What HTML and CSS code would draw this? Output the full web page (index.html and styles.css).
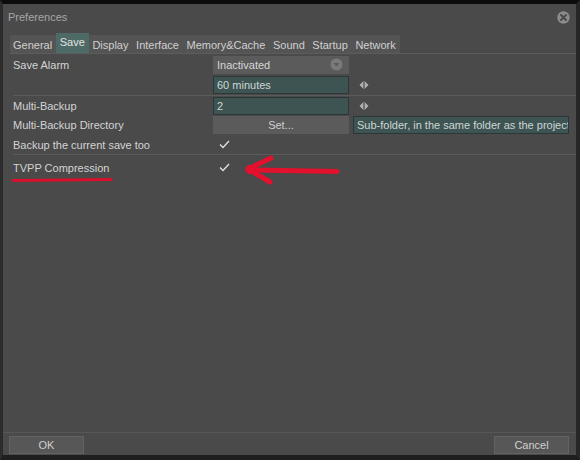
FILE: index.html
```html
<!DOCTYPE html>
<html>
<head>
<meta charset="utf-8">
<title>Preferences</title>
<link rel="stylesheet" href="styles.css">
</head>
<body>
<div class="window">
  <div class="titlebar">
    <span class="title">Preferences</span>
    <svg class="close" width="13" height="13" viewBox="0 0 13 13"><circle cx="6.5" cy="6.5" r="6.2" fill="#8c8c8c"/><path d="M4 4 L9 9 M9 4 L4 9" stroke="#4a4a4a" stroke-width="2" stroke-linecap="round"/></svg>
  </div>
  <div class="tabs">
    <span class="tab">General</span>
    <span class="tab active">Save</span>
    <span class="tab">Display</span>
    <span class="tab">Interface</span>
    <span class="tab">Memory&amp;Cache</span>
    <span class="tab">Sound</span>
    <span class="tab">Startup</span>
    <span class="tab">Network</span>
  </div>
  <div class="content">
    <div class="section s1">
      <div class="row">
        <span class="label">Save Alarm</span>
        <div class="combo">Inactivated
          <svg class="combo-icon" width="13" height="13" viewBox="0 0 13 13"><circle cx="6.5" cy="6.5" r="6" fill="#7a7a7a"/><path d="M3.5 5 L9.5 5 L6.5 8.5 Z" fill="#5a5a5a"/></svg>
        </div>
      </div>
      <div class="row">
        <span class="label"></span>
        <div class="field">60 minutes</div>
        <svg class="spin" width="10" height="8" viewBox="0 0 10 8"><path d="M4 0.5 L0.5 4 L4 7.5 Z M6 0.5 L9.5 4 L6 7.5 Z" fill="#b0b0b0"/><rect x="4.6" y="0" width="0.8" height="8" fill="#b0b0b0"/></svg>
      </div>
    </div>
    <div class="section s2">
      <div class="row">
        <span class="label">Multi-Backup</span>
        <div class="field">2</div>
        <svg class="spin" width="10" height="8" viewBox="0 0 10 8"><path d="M4 0.5 L0.5 4 L4 7.5 Z M6 0.5 L9.5 4 L6 7.5 Z" fill="#b0b0b0"/><rect x="4.6" y="0" width="0.8" height="8" fill="#b0b0b0"/></svg>
      </div>
      <div class="row">
        <span class="label">Multi-Backup Directory</span>
        <div class="button">Set...</div>
        <div class="field wide">Sub-folder, in the same folder as the project</div>
      </div>
      <div class="row tall">
        <span class="label">Backup the current save too</span>
        <svg class="check" width="11" height="9" viewBox="0 0 11 9"><path d="M1 4.5 L4 7.5 L10 1" fill="none" stroke="#e0e0e0" stroke-width="1.3"/></svg>
      </div>
    </div>
    <div class="section s3">
      <div class="row taller">
        <span class="label">TVPP Compression</span>
        <svg class="check" width="11" height="9" viewBox="0 0 11 9"><path d="M1 4.5 L4 7.5 L10 1" fill="none" stroke="#e0e0e0" stroke-width="1.3"/></svg>
      </div>
    </div>
  </div>
  <div class="footer">
    <div class="button small">OK</div>
    <div class="button small">Cancel</div>
  </div>
  <svg class="annot" width="580" height="460" viewBox="0 0 580 460">
    <path d="M13 180.5 L111 179.5" stroke="#d9102c" stroke-width="3" stroke-linecap="round"/>
    <path d="M337 171.5 L256 170" stroke="#e3102e" stroke-width="5" stroke-linecap="round"/>
    <path d="M271 158 L248 169 L270 182" fill="none" stroke="#e3102e" stroke-width="5" stroke-linecap="round" stroke-linejoin="round"/>
    <circle cx="250" cy="169.5" r="4.5" fill="#e3102e"/>
  </svg>
</div>
</body>
</html>
```

FILE: styles.css
```css
* { box-sizing: border-box; }
html, body { margin: 0; padding: 0; }
body {
  width: 580px;
  height: 460px;
  background: #1c1c1c;
  font-family: "Liberation Sans", Arial, sans-serif;
  font-size: 11px;
  color: #d2d2d2;
  overflow: hidden;
}
.window {
  position: relative;
  width: 580px;
  height: 460px;
  background: #4a4a4a;
  border-top: 4px solid #0c0c0c;
  border-right: 4px solid #262626;
  border-bottom: 5px solid #1e1e1e;
  border-left: 3px solid #2c2c2c;
  display: flex;
  flex-direction: column;
}
.titlebar {
  height: 30px;
  display: flex;
  align-items: center;
  justify-content: space-between;
  padding: 0 6px 5px 5px;
}
.title { color: #a6a6a6; }
.close { display: block; margin-top: 1px; }
.tabs {
  height: 20px;
  display: flex;
  align-items: flex-end;
  margin-left: 7px;
  border-bottom: 1px solid #5c5c5c;
}
.tab {
  height: 18px;
  line-height: 18px;
  padding: 1px 4px 0 3.6px;
  background: #545454;
  color: #d0d0d0;
}
.tab:first-child { padding-left: 3px; }
.tab.active {
  height: 20px;
  line-height: 16px;
  background: #4e6a66;
  color: #e2e2e2;
}
.content { padding-left: 10px; }
.section { border-bottom: 1px solid #5a5a5a; }
.s1 { padding: 2px 0 1px; display: flex; flex-direction: column; gap: 2px; }
.s2 { padding: 1px 0 0; display: flex; flex-direction: column; gap: 1px; }
.s3 { border-bottom: none; padding-top: 1px; }
.row {
  height: 18px;
  display: grid;
  grid-template-columns: 196px 136px 216px;
  column-gap: 4px;
  align-items: center;
}
.row.tall { height: 19px; }
.row.taller { height: 23px; }
.label { color: #d4d4d4; }
.combo {
  position: relative;
  height: 18px;
  line-height: 18px;
  padding-left: 4px;
  background: #5b5b5b;
  color: #d6d6d6;
}
.combo-icon { position: absolute; right: 6px; top: 2px; }
.field {
  height: 18px;
  line-height: 16px;
  padding-left: 3px;
  background: #3e5452;
  border: 1px solid #2b3736;
  color: #cdd6d4;
  white-space: nowrap;
  overflow: hidden;
}
.spin { margin-left: 6px; }
.button {
  height: 18px;
  line-height: 18px;
  text-align: center;
  background: #5b5b5b;
  color: #cfcfcf;
}
.check { margin-left: 6px; }
.footer {
  margin-top: auto;
  border-top: 1px solid #575757;
  padding: 3px 7px 1px 6px;
  display: flex;
  justify-content: space-between;
}
.button.small {
  width: 75px;
  border: 1px solid #626262;
  line-height: 16px;
  background: #575757;
}
.annot {
  position: absolute;
  left: -3px;
  top: -4px;
  pointer-events: none;
}
```
